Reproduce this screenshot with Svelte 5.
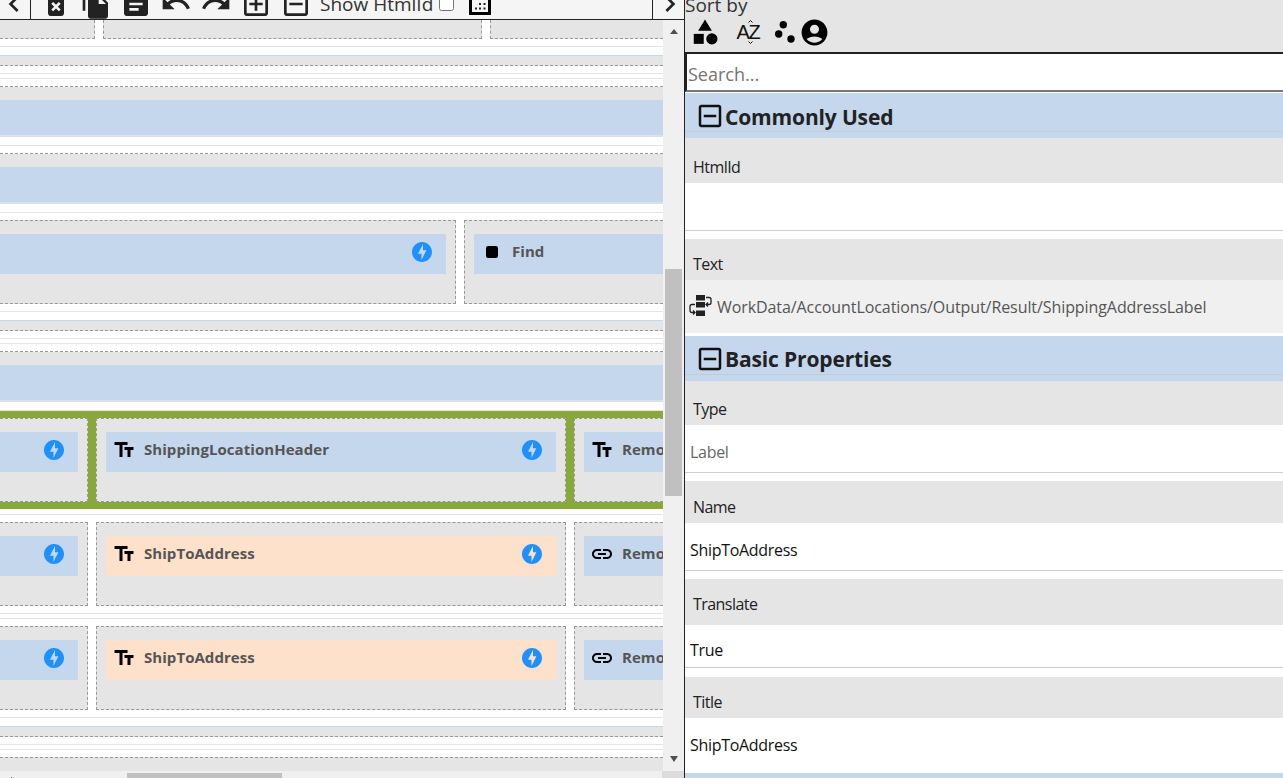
<script>
  const props1 = [
    { label: 'HtmlId', lh: 45, lt: 18, value: '', vh: 47, vt: 27, rule: true, after: 8 }
  ];
  const props2 = [
    { label: 'Type', lh: 44, lt: 17, value: 'Label', vh: 47, vt: 16, rule: true, after: 8, muted: true },
    { label: 'Name', lh: 42, lt: 15, value: 'ShipToAddress', vh: 47, vt: 16, rule: true, after: 8 },
    { label: 'Translate', lh: 46, lt: 14, value: 'True', vh: 42, vt: 14, rule: true, after: 9 },
    { label: 'Title', lh: 41, lt: 14, value: 'ShipToAddress', vh: 55, vt: 16, rule: false, after: 0 }
  ];
  const boltPath = 'M12 2.02c-5.51 0-9.98 4.47-9.98 9.98s4.47 9.98 9.98 9.98 9.98-4.47 9.98-9.98S17.51 2.02 12 2.02zM11.48 20v-6.26H8L13 4v6.26h3.35L11.48 20z';
  const textPath = 'M2.5 4v3h5v12h3V7h5V4h-13zm19 5h-9v3h3v7h3v-7h3V9z';
  const linkPath = 'M3.9 12c0-1.71 1.39-3.1 3.1-3.1h4V7H7c-2.76 0-5 2.24-5 5s2.24 5 5 5h4v-1.9H7c-1.71 0-3.1-1.39-3.1-3.1zM8 13h8v-2H8v2zm9-6h-4v1.9h4c1.71 0 3.1 1.39 3.1 3.1s-1.39 3.1-3.1 3.1h-4V17h4c2.76 0 5-2.24 5-5s-2.24-5-5-5z';
  const stopPath = 'M8 6h8c1.1 0 2 .9 2 2v8c0 1.1-.9 2-2 2H8c-1.1 0-2-.9-2-2V8c0-1.1.9-2 2-2z';
  const minusBox = 'M19 3H5c-1.1 0-2 .9-2 2v14c0 1.1.9 2 2 2h14c1.1 0 2-.9 2-2V5c0-1.1-.9-2-2-2zm0 16H5V5h14v14zM7 11h10v2H7z';
  const tools = [
    'M6 19c0 1.1.9 2 2 2h8c1.1 0 2-.9 2-2V7H6v12zm2.46-7.12l1.41-1.41L12 12.59l2.12-2.12 1.41 1.41L13.41 14l2.12 2.12-1.41 1.41L12 15.41l-2.12 2.12-1.41-1.41L10.59 14l-2.13-2.12zM15.5 4l-1-1h-5l-1 1H5v2h14V4h-3.5z',
    'M16 1H4c-1.1 0-2 .9-2 2v14h2V3h12V1zm-1 4l6 6v10c0 1.1-.9 2-2 2H7.99C6.89 23 6 22.1 6 21l.01-14c0-1.1.89-2 1.99-2h7zm-1 7h5.5L14 6.5V12z',
    'M19 3H5c-1.1 0-2 .9-2 2v14c0 1.1.9 2 2 2h14c1.1 0 2-.9 2-2V5c0-1.1-.9-2-2-2zm-5 14H7v-2h7v2zm3-4H7v-2h10v2zm0-4H7V7h10v2z',
    'M12.5 8c-2.65 0-5.05.99-6.9 2.6L2 7v9h9l-3.62-3.62c1.39-1.16 3.16-1.88 5.12-1.88 3.54 0 6.55 2.31 7.6 5.5l2.37-.78C21.08 11.03 17.15 8 12.5 8z',
    'M18.4 10.6C16.55 8.99 14.15 8 11.5 8c-4.65 0-8.58 3.03-9.96 7.22L3.9 16c1.05-3.19 4.05-5.5 7.6-5.5 1.95 0 3.73.72 5.12 1.88L13 16h9V7l-3.6 3.6z',
    'M19 3H5c-1.11 0-2 .9-2 2v14c0 1.1.89 2 2 2h14c1.1 0 2-.9 2-2V5c0-1.1-.9-2-2-2zm0 16H5V5h14v14zm-8-2h2v-4h4v-2h-4V7h-2v4H7v2h4z',
    minusBox
  ];
</script>

{#snippet icon(d, cls = '')}
  <svg class="ico {cls}" viewBox="0 0 24 24"><path fill-rule="evenodd" d={d} /></svg>
{/snippet}

{#snippet item(path, name, tone = '')}
  <div class="item {tone}">
    {#if path}
      {@render icon(path)}
      <span class="name">{name}</span>
    {/if}
  </div>
{/snippet}

{#snippet boltItem(path, name, tone = '')}
  <div class="item {tone}">
    {#if path}
      {@render icon(path)}
      <span class="name">{name}</span>
    {/if}
    {@render icon(boltPath, 'bolt')}
  </div>
{/snippet}

{#snippet threeCells(path, name, tone, path3)}
  <div class="cell first narrow">{@render boltItem('', '')}</div>
  <div class="cell wide">{@render boltItem(path, name, tone)}</div>
  <div class="cell last">{@render item(path3, 'Remove')}</div>
{/snippet}

<div class="app">
  <section class="left">
    <div class="toolbar">
      <button class="chev chev-l" aria-label="Previous">{@render icon('M15.41 7.41L14 6l-6 6 6 6 1.41-1.41L10.83 12z', 'big')}</button>
      <div class="tools">
        {#each tools as t}
          {@render icon(t, 'big')}
        {/each}
      </div>
      <label class="show">Show HtmlId <input type="checkbox" /></label>
      <svg class="grid-ico" viewBox="0 0 22 15">
        <rect x="1.5" y="-3" width="19" height="16.5" fill="none" stroke="#000" stroke-width="3" />
        <path d="M10 3h2v2h-2zM14.5 3h2v2h-2zM6 7.500h2v2H6zM10 7.500h2v2h-2zM14.500 7.500h2v2h-2z" fill="#222" />
      </svg>
      <button class="chev chev-r" aria-label="Next">{@render icon('M10 6L8.590 7.410 13.170 12l-4.580 4.590L10 18l6-6z', 'big')}</button>
    </div>

    <div class="main">
      <div class="canvas">
        <div class="row top-row">
          <div class="stub s1"></div>
          <div class="stub s2"></div>
          <div class="stub s3"></div>
        </div>
        <div class="sep-a"></div>
        <div class="slim"></div>
        <div class="sep-b"></div>
        <div class="full"><div class="full-bar"></div></div>
        <div class="sep-c"></div>
        <div class="full"><div class="full-bar"></div></div>
        <div class="sep-c"></div>
        <div class="row">
          <div class="cell first find-left">{@render boltItem('', '')}</div>
          <div class="cell last">{@render item(stopPath, 'Find')}</div>
        </div>
        <div class="sep-a"></div>
        <div class="slim"></div>
        <div class="sep-b"></div>
        <div class="full"><div class="full-bar"></div></div>
        <div class="sep-d"></div>
        <div class="row selected">
          {@render threeCells(textPath, 'ShippingLocationHeader', '', textPath)}
        </div>
        <div class="sep-e"></div>
        <div class="row">
          {@render threeCells(textPath, 'ShipToAddress', 'peach', linkPath)}
        </div>
        <div class="sep-b"></div>
        <div class="row">
          {@render threeCells(textPath, 'ShipToAddress', 'peach', linkPath)}
        </div>
        <div class="sep-a"></div>
        <div class="slim"></div>
        <div class="sep-b"></div>
        <div class="tail"></div>
      </div>
      <div class="vscroll">
        <span class="arrow up"></span>
        <span class="vthumb"></span>
        <span class="arrow down"></span>
      </div>
    </div>

    <div class="hscroll">
      <div class="htrack"><span class="hthumb"></span></div>
      <div class="corner"></div>
    </div>
  </section>

  <aside class="right">
    <div class="sort">
      <div class="sort-title">Sort by</div>
      <div class="sort-icons">
        <svg class="s-cat" viewBox="0 0 24 24"><path d="M12 2l-5.500 9h11z" /><circle cx="17.500" cy="17.500" r="4.500" /><path d="M3 13.500h8v8H3z" /></svg>
        <svg class="s-az" viewBox="0 0 28 26">
          <text x="1.500" y="20" class="az">A</text>
          <text x="13.500" y="20" class="az">Z</text>
          <path d="M13.500 3.500l2-2 2 2M13.500 22.500l2 2 2-2" fill="none" stroke="#111" stroke-width="1" />
        </svg>
        <svg class="s-dots" viewBox="0 0 22 22"><circle cx="9.300" cy="3.700" r="3.700" /><circle cx="4.700" cy="13" r="3.700" /><circle cx="17" cy="18" r="3.700" /></svg>
        <svg class="s-acc" viewBox="0 0 24 24"><path fill-rule="evenodd" d="M12 2C6.480 2 2 6.480 2 12s4.480 10 10 10 10-4.480 10-10S17.520 2 12 2zm0 4c1.930 0 3.500 1.570 3.500 3.500S13.930 13 12 13s-3.500-1.570-3.500-3.500S10.070 6 12 6zm0 14c-2.030 0-4.430-.820-6.140-2.880C7.550 15.800 9.680 15 12 15s4.450.8 6.140 2.120C16.430 19.180 14.030 20 12 20z" /></svg>
      </div>
    </div>
    <input class="search" placeholder="Search..." />

    {#snippet group(title, cls = '')}
      <div class="group {cls}"><div class="group-inner">
        {@render icon(minusBox, 'minus')}
        <span>{title}</span>
      </div></div>
    {/snippet}

    {#snippet prop(p)}
      <div class="p-label" style="height:{p.lh}px;padding-top:{p.lt}px">{p.label}</div>
      <div class="p-value" class:muted={p.muted} class:rule={p.rule} style="height:{p.vh + (p.rule ? 1 : 0)}px;padding-top:{p.vt}px;margin-bottom:{p.after}px">{p.value}</div>
    {/snippet}

    {@render group('Commonly Used', 'lower-title')}
    {#each props1 as p}
      {@render prop(p)}
    {/each}
    <div class="p-label text-label">Text</div>
    <div class="binding">
      <svg class="bind-ico" viewBox="0 0 24 24">
        <path d="M7 0h9v5.500H7zM7 7h9v5.500H7zM7 15.500h9V21H7z" />
        <path d="M17 2.500h3q2 0 2 2v3q0 2-2 2h-3M19 7.500l-2 2 2 2M6 9.500H3q-2 0-2 2v4q0 2 2 2h3M4 15.500l2 2-2 2" fill="none" stroke="#222" stroke-width="1.300" />
      </svg>
      <span>WorkData/AccountLocations/Output/Result/ShippingAddressLabel</span>
    </div>
    {@render group('Basic Properties')}
    {#each props2 as p}
      {@render prop(p)}
    {/each}
    <div class="group"></div>
  </aside>
</div>

<style>
  :global(body) {
    margin: 0;
    overflow: hidden;
    background: #fff;
  }
  .app {
    display: flex;
    width: 1283px;
    height: 778px;
    overflow: hidden;
    font-family: "Open Sans", "Noto Sans", sans-serif;
    color: #222;
  }
  .left {
    width: 684px;
    flex: none;
    display: flex;
    flex-direction: column;
    border-right: 1px solid #222;
  }
  .ico {
    width: 24px;
    height: 24px;
    flex: none;
    display: block;
    fill: #000;
  }
  .ico.big {
    width: 32px;
    height: 32px;
    fill: #222;
  }
  .ico.bolt {
    margin-left: auto;
    fill: #1e90ff;
  }
  .ico.minus {
    width: 30px;
    height: 30px;
    fill: #111;
  }

  .toolbar {
    height: 19px;
    flex: none;
    display: flex;
    align-items: flex-start;
    background: #f5f5f5;
    border-bottom: 1px solid #222;
    overflow: hidden;
  }
  .toolbar .ico.big {
    margin-top: -12px;
  }
  .chev {
    all: unset;
    display: block;
    height: 19px;
    flex: none;
  }
  .chev-l {
    width: 30px;
    border-right: 1px solid #222;
  }
  .chev-l .ico {
    margin-left: -2px;
  }
  .chev-r {
    width: 31px;
    margin-left: auto;
    border-left: 1px solid #222;
  }
  .chev-r .ico {
    margin-left: 1px;
  }
  .tools {
    display: flex;
    gap: 8px;
    margin-left: 9px;
  }
  .show {
    margin-left: 8px;
    margin-top: -9px;
    font-size: 19px;
    line-height: 26px;
    white-space: nowrap;
    color: #333;
    display: flex;
    gap: 6px;
  }
  .show input {
    width: 15px;
    height: 15px;
    margin: 5px 0 0;
    flex: none;
  }
  .grid-ico {
    width: 22px;
    height: 15px;
    flex: none;
    margin-left: 15px;
  }

  .main {
    flex: 1;
    display: flex;
    min-height: 0;
  }
  .canvas {
    flex: 1;
    min-width: 0;
    overflow: hidden;
    background: #fff;
  }
  .vscroll {
    width: 21px;
    flex: none;
    background: #f0f0f0;
    display: flex;
    flex-direction: column;
    align-items: center;
  }
  .arrow {
    width: 0;
    height: 0;
    border-left: 4.500px solid transparent;
    border-right: 4.500px solid transparent;
    flex: none;
  }
  .arrow.up {
    border-bottom: 5px solid #505050;
    margin-top: 9px;
  }
  .arrow.down {
    border-top: 6px solid #505050;
    margin-top: auto;
    margin-bottom: 9px;
  }
  .vthumb {
    width: 17px;
    height: 227px;
    margin-top: 235px;
    background: #c0c0c0;
    flex: none;
  }
  .hscroll {
    height: 7px;
    flex: none;
    display: flex;
    background: #f0f0f0;
  }
  .htrack {
    flex: 1;
    padding-top: 2px;
    position: relative;
  }
  .htrack::before {
    content: "";
    position: absolute;
    left: 11px;
    bottom: 0;
    width: 1px;
    height: 1px;
    background: #505050;
  }
  .hthumb {
    display: block;
    width: 155px;
    height: 5px;
    margin-left: 127px;
    background: #c0c0c0;
  }
  .corner {
    width: 22px;
    background: #dcdcdc;
  }

  .row {
    display: flex;
    gap: 8px;
    width: 663px;
  }
  .top-row .stub {
    height: 19px;
    box-sizing: border-box;
    background: #e5e5e5;
    border-bottom: 1px dashed #999;
    flex: none;
  }
  .s1 {
    width: 95px;
    border-right: 1px dashed #999;
  }
  .s2 {
    width: 379px;
    border-left: 1px dashed #999;
    border-right: 1px dashed #999;
  }
  .s3 {
    width: 173px;
    border-left: 1px dashed #999;
    flex: 1 !important;
  }
  .sep-a {
    margin-top: 7px;
    height: 8px;
    border-top: 1px solid #e5e5e5;
    border-bottom: 1px solid #c5d7ed;
  }
  .slim {
    height: 9px;
    background: #e5e5e5;
    border-bottom: 1px dashed #999;
  }
  .sep-b {
    margin: 7px 0;
    height: 4px;
    border-top: 1px solid #e5e5e5;
    border-bottom: 1px solid #e5e5e5;
  }
  .sep-c {
    margin-top: 9px;
    margin-bottom: 7px;
    border-top: 1px solid #e5e5e5;
  }
  .sep-d {
    margin-top: 9px;
    border-top: 1px solid #e5e5e5;
  }
  .sep-e {
    margin-top: 5px;
    margin-bottom: 7px;
    border-top: 1px solid #e5e5e5;
  }
  .full {
    border-top: 1px dashed #999;
    padding-top: 13px;
    background: linear-gradient(#e5e5e5, #e5e5e5) top / 100% 14px no-repeat;
  }
  .full-bar {
    height: 35px;
    background: #c5d7ed;
    border-bottom: 1px solid #dde2e8;
    box-shadow: 0 1px 0 #d5e2f2;
  }
  .tail {
    height: 14px;
    background: #e5e5e5;
    border-top: 1px dashed #999;
  }
  .selected {
    background: #88a83c;
    padding: 7px 0;
    margin: 0;
  }
  .cell {
    height: 84px;
    box-sizing: border-box;
    background: #e5e5e5;
    border: 1px dashed #999;
    padding: 13px 9px 29px;
    flex: none;
  }
  .cell.first {
    border-left: none;
    padding-left: 0;
  }
  .cell.narrow {
    width: 88px;
  }
  .cell.wide {
    width: 470px;
  }
  .cell.find-left {
    width: 456px;
  }
  .cell.last {
    flex: 1;
    min-width: 0;
    border-right: none;
    padding-right: 0;
    overflow: hidden;
  }
  .item {
    height: 40px;
    box-sizing: border-box;
    display: flex;
    padding: 6px 12px 0 6px;
    background: #c5d7ed;
    overflow: hidden;
  }
  .item.peach {
    background: #fde1ca;
  }
  .name {
    margin: -1px 0 0 8px;
    font-size: 15px;
    font-weight: 700;
    line-height: 24px;
    letter-spacing: 0.05px;
    color: #555;
    white-space: nowrap;
  }

  .right {
    flex: 1;
    min-width: 0;
    overflow: hidden;
  }
  .sort {
    height: 52px;
    background: #e5e5e5;
    overflow: hidden;
  }
  .sort-title {
    font-size: 19px;
    line-height: 22px;
    margin-top: -6px;
    color: #333;
  }
  .sort-icons {
    display: flex;
    align-items: center;
    height: 30px;
    margin-top: 1px;
    padding-left: 5px;
  }
  .sort-icons svg {
    flex: none;
    display: block;
    fill: #000;
  }
  .s-cat {
    width: 30px;
    height: 30px;
    margin-right: 15px;
  }
  .s-az {
    width: 28px;
    height: 26px;
    margin-right: 11px;
  }
  .az {
    font-family: "Liberation Sans", sans-serif;
    font-size: 20px;
    fill: #111;
  }
  .s-dots {
    width: 22px;
    height: 22px;
    margin-right: 3px;
  }
  .s-acc {
    width: 31px;
    height: 31px;
  }
  .search {
    display: block;
    box-sizing: border-box;
    width: 100%;
    height: 40px;
    margin: 0 0 1px;
    padding: 3px 0 0 1px;
    background: #fff;
    border: none;
    border-top: 2px solid #222;
    border-left: 2px solid #222;
    border-bottom: 2px solid #767676;
    outline: none;
    font-family: inherit;
    font-size: 18px;
  }
  .search::placeholder {
    color: #757575;
  }
  .group {
    height: 45px;
    background: #c5d7ed;
  }
  .group-inner {
    height: 39px;
    box-sizing: border-box;
    display: flex;
    align-items: flex-start;
    padding: 8px 0 0 10px;
    border-bottom: 1px solid #c3ccd6;
    font-size: 21px;
    font-weight: 700;
    line-height: 30px;
    letter-spacing: -0.15px;
    color: #222;
  }
  .lower-title span {
    margin-top: 1px;
  }
  .p-label,
  .p-value {
    box-sizing: border-box;
    font-size: 16px;
    line-height: 22px;
    overflow: hidden;
    white-space: nowrap;
  }
  .p-label {
    background: #e5e5e5;
    padding-left: 8px;
    letter-spacing: -0.55px;
    color: #222;
  }
  .text-label {
    height: 41px;
    padding-top: 14px;
  }
  .p-value {
    padding-left: 5px;
    letter-spacing: -0.3px;
    color: #111;
    background: #fff;
  }
  .p-value.rule {
    border-bottom: 1px solid #ccc;
  }
  .p-value.muted {
    color: #666;
  }
  .binding {
    height: 53px;
    margin-bottom: 3px;
    box-sizing: border-box;
    display: flex;
    align-items: center;
    gap: 4px;
    padding-left: 4px;
    background: #f0f0f0;
    font-size: 16px;
    letter-spacing: -0.08px;
    color: #555;
    white-space: nowrap;
  }
  .bind-ico {
    width: 24px;
    height: 24px;
    flex: none;
    fill: #222;
  }
</style>
